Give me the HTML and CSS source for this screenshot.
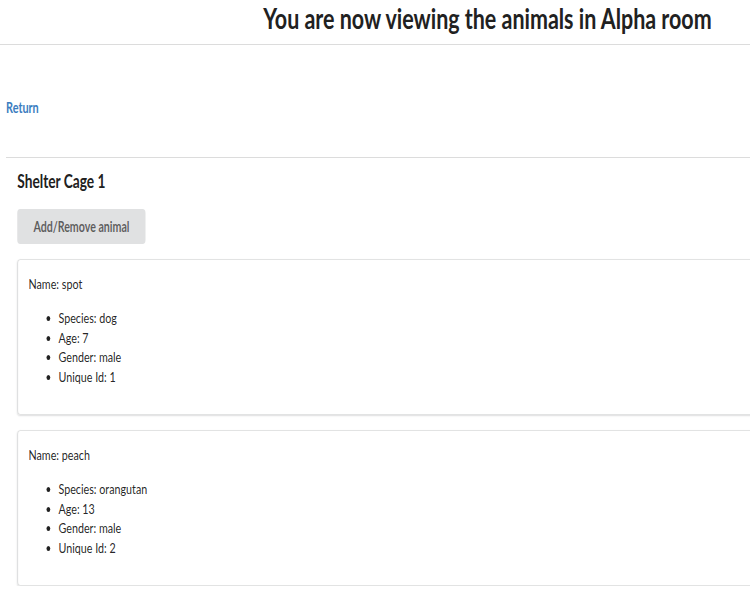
FILE: index.html
```html
<!DOCTYPE html>
<html lang="en">
<head>
<meta charset="utf-8">
<title>Alpha room</title>
<link rel="stylesheet" href="styles.css">
</head>
<body>
<div class="page">
  <header class="top">
    <h1 class="title">You are now viewing the animals in Alpha room</h1>
  </header>
  <div class="nav">
    <a class="return" href="#">Return</a>
  </div>
  <section class="cage">
    <h3 class="cage-title">Shelter Cage 1</h3>
    <button class="btn" type="button">Add/Remove animal</button>
    <div class="card">
      <p class="name">Name: spot</p>
      <ul class="facts">
        <li>Species: dog</li>
        <li>Age: 7</li>
        <li>Gender: male</li>
        <li>Unique Id: 1</li>
      </ul>
    </div>
    <div class="card">
      <p class="name">Name: peach</p>
      <ul class="facts">
        <li>Species: orangutan</li>
        <li>Age: 13</li>
        <li>Gender: male</li>
        <li>Unique Id: 2</li>
      </ul>
    </div>
  </section>
</div>
</body>
</html>
```

FILE: styles.css
```css
html, body {
  margin: 0;
  padding: 0;
  overflow: hidden;
  background: #ffffff;
}

body {
  font-family: Lato, "Helvetica Neue", Arial, sans-serif;
  font-size: 14px;
  color: rgba(0, 0, 0, 0.87);
}

.page {
  width: 1300px;
  transform: scaleX(0.75);
  transform-origin: 0 0;
}

.top {
  padding-bottom: 8px;
  border-bottom: 1px solid #dcdcdc;
}

.title {
  margin: 0;
  font-size: 28.6px;
  line-height: 36px;
  font-weight: 700;
  color: #212121;
  text-align: center;
}

.nav {
  margin-top: 53px;
  padding-left: 8px;
  line-height: 20px;
}

.return {
  color: #3b7dc0;
  font-size: 14.5px;
  font-weight: 700;
  text-decoration: none;
}

.cage {
  margin-top: 39px;
  margin-left: 8px;
  border-top: 1px solid #dcdcdc;
  padding: 12px 0 0 15px;
}

.cage-title {
  margin: 0;
  font-size: 18.3px;
  line-height: 23px;
  font-weight: 700;
  color: #212121;
}

.btn {
  display: inline-block;
  margin-top: 16px;
  padding: 10.5px 21.5px;
  border: 0;
  border-radius: 4px;
  background: #e0e1e2;
  color: rgba(0, 0, 0, 0.6);
  font-family: Lato, "Helvetica Neue", Arial, sans-serif;
  font-size: 14.2px;
  line-height: 14px;
  font-weight: 700;
}

.card {
  margin-top: 15px;
  padding: 14px;
  border: 1px solid rgba(34, 36, 38, 0.15);
  border-radius: 4px;
  box-shadow: 0 1px 2px 0 rgba(34, 36, 38, 0.15);
  font-size: 14.3px;
  line-height: 19px;
}

.card + .card {
  margin-top: 15px;
}

.name {
  margin: 0;
}

.facts {
  margin: 15px 0 14px;
  padding-left: 40px;
  line-height: 19.5px;
}
```
